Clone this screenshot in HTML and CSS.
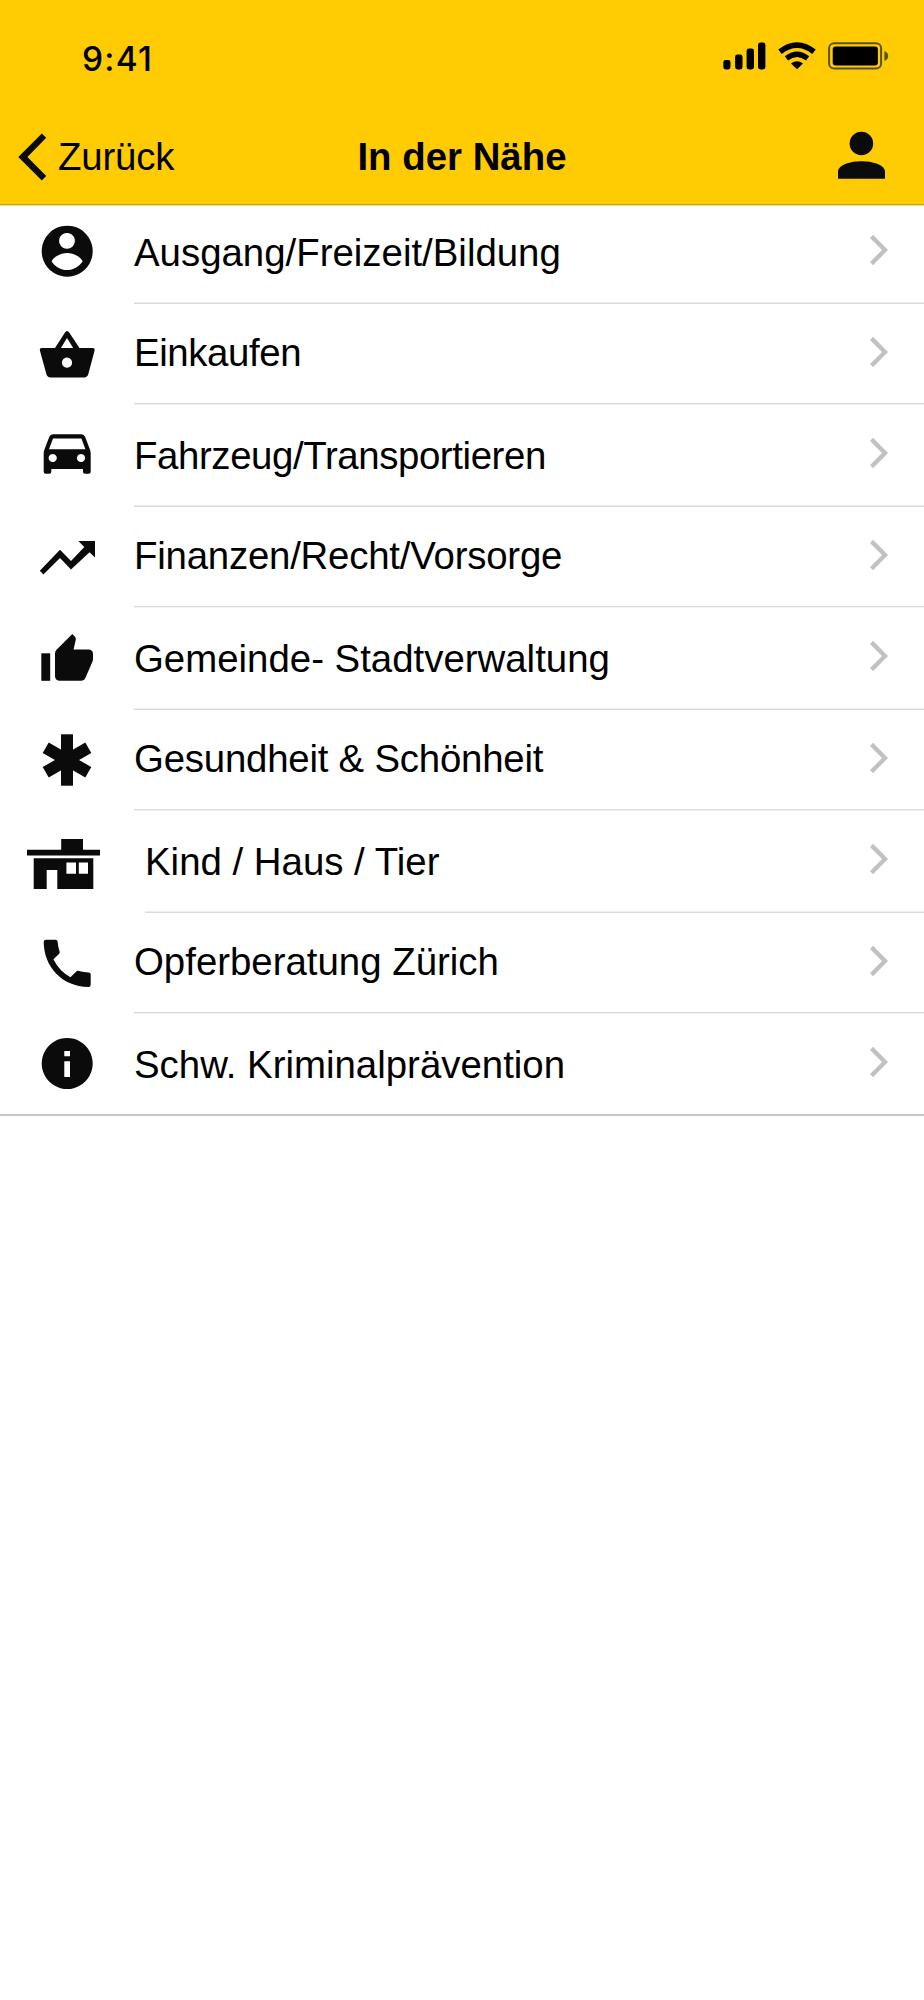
FILE: index.html
```html
<!DOCTYPE html>
<html lang="de">
<head>
    <meta charset="UTF-8">
    <meta name="viewport" content="width=device-width, initial-scale=1.0">
    <title>In der Nähe</title>
    <link rel="stylesheet" href="styles.css">
</head>
<body>
    <header class="header">
        <div class="status-bar">
            <span class="time">9:41</span>
            <div class="status-icons">
                <svg class="signal" width="43" height="28" viewBox="0 0 43 28">
                    <rect x="0.3" y="18" width="7.2" height="9.4" rx="2.4"/>
                    <rect x="12.1" y="12.6" width="7.4" height="14.8" rx="2.4"/>
                    <rect x="23.6" y="6.6" width="7.4" height="20.8" rx="2.4"/>
                    <rect x="35" y="0.6" width="7.4" height="26.8" rx="2.4"/>
                </svg>
                <svg class="wifi" width="38" height="28" viewBox="0 0 38 28">
                    <path d="M2 9.8Q19 -3.4 36 9.8" fill="none" stroke="#000" stroke-width="5.6"/>
                    <path d="M8.4 16.4Q19 8 29.6 16.4" fill="none" stroke="#000" stroke-width="5.2"/>
                    <path d="M13 21.6Q19 16.8 25 21.6L19 27.2Z"/>
                </svg>
                <svg class="battery" width="61" height="28" viewBox="0 0 61 28">
                    <rect x="1.1" y="1.2" width="52" height="25.4" rx="5" fill="none" stroke="#5a512a" stroke-width="2"/>
                    <rect x="4.7" y="4.6" width="45.2" height="18.8" rx="3"/>
                    <path d="M56.4 9q3.8 1.6 3.8 5t-3.8 5z" fill="#5a512a"/>
                </svg>
            </div>
        </div>
        <nav class="nav-bar">
            <a class="back" href="#">
                <svg width="28" height="48" viewBox="0 0 28 48">
                    <path d="M0.3 24L23.8 0.4L28.2 4.8L9.4 24L28.2 43L23.8 47.4Z"/>
                </svg>
                <span>Zurück</span>
            </a>
            <h1 class="title">In der Nähe</h1>
            <a class="profile" href="#">
                <svg width="47" height="48" viewBox="0 0 47 48">
                    <circle cx="23.4" cy="12.5" r="11.8"/>
                    <path d="M0 47.7V41C0 33.5 13 30.3 23.5 30.3S47 33.5 47 41V47.7Z"/>
                </svg>
            </a>
        </nav>
    </header>

    <ul class="list">
        <li class="item">
            <svg class="icon" viewBox="0 0 62 62">
                <path fill-rule="evenodd" d="M31.2 5.7a25.5 25.5 0 1 0 0.01 0ZM31 12.9a7.9 7.9 0 1 1 -0.01 0ZM15.5 41.2C18.5 36 25.5 33 31.2 33S43.8 36 46.7 41.2C43 47 37 50 31 50S19 47 15.5 41.2Z"/>
            </svg>
            <div class="content">
                <span class="label">Ausgang/Freizeit/Bildung</span>
                <svg class="chevron" viewBox="0 0 18 32"><path d="M0 3.9L3 0.8L18 16L3 31.2L0 28.1L12 16Z"/></svg>
            </div>
        </li>
        <li class="item">
            <svg class="icon" viewBox="0 0 62 62">
                <path d="M18.5 25.8L29 9.6Q31 6.6 33.2 9.6L44 25.8H37.6L31 15L24.5 25.8Z"/>
                <path fill-rule="evenodd" d="M5.8 25H56.4Q59 25 58.6 27.4L52.4 50.8Q51.4 54.6 48 54.6H14.5Q11.3 54.6 10.3 50.8L3.9 27.4Q3.5 25 5.8 25ZM31 34.6a5.1 5.1 0 1 0 0.01 0Z"/>
            </svg>
            <div class="content">
                <span class="label tighter">Einkaufen</span>
                <svg class="chevron" viewBox="0 0 18 32"><path d="M0 3.9L3 0.8L18 16L3 31.2L0 28.1L12 16Z"/></svg>
            </div>
        </li>
        <li class="item">
            <svg class="icon" viewBox="0 0 62 62">
                <path fill-rule="evenodd" d="M13.2 14Q14.2 11.3 17 11.3H45.4Q48.2 11.3 49.2 14L54.1 27Q54.7 28.4 54.7 30V48.7q0 2-2 2H49q-2 0-2-2V46H15.3V48.7q0 2-2 2H9.7q-2 0-2-2V30Q7.7 28.4 8.3 27ZM17 15.4L13 26.2H49.4L45.4 15.4ZM16.7 30.9a4.1 4.1 0 1 0 0.01 0ZM45 30.9a4.1 4.1 0 1 0 0.01 0Z"/>
            </svg>
            <div class="content">
                <span class="label tighter">Fahrzeug/Transportieren</span>
                <svg class="chevron" viewBox="0 0 18 32"><path d="M0 3.9L3 0.8L18 16L3 31.2L0 28.1L12 16Z"/></svg>
            </div>
        </li>
        <li class="item">
            <svg class="icon" viewBox="0 0 62 62">
                <path d="M3.8 44.8L24 23.8L35 35L48.3 21L42.3 15H59V31.6L53.5 26.2L35 43.4L24 32L7.4 48.4Z"/>
            </svg>
            <div class="content">
                <span class="label tight">Finanzen/Recht/Vorsorge</span>
                <svg class="chevron" viewBox="0 0 18 32"><path d="M0 3.9L3 0.8L18 16L3 31.2L0 28.1L12 16Z"/></svg>
            </div>
        </li>
        <li class="item">
            <svg class="icon" viewBox="0 0 62 62">
                <rect x="5.3" y="27.3" width="8.9" height="27.5"/>
                <path d="M36.3 8L39 10.7Q40.1 12 39.8 13.6L37.6 23.4H52.3Q57 23.4 57 28V33Q57 34.5 56.3 36L49.6 51.5Q48.2 54.7 45 54.7H24Q19 54.7 19 50V27.5Q19 25.3 20.5 23.8Z"/>
            </svg>
            <div class="content">
                <span class="label">Gemeinde- Stadtverwaltung</span>
                <svg class="chevron" viewBox="0 0 18 32"><path d="M0 3.9L3 0.8L18 16L3 31.2L0 28.1L12 16Z"/></svg>
            </div>
        </li>
        <li class="item">
            <svg class="icon" viewBox="0 0 62 62">
                <rect x="25" y="5.3" width="12" height="51.4"/>
                <rect x="25" y="6.4" width="12" height="49.2" transform="rotate(60 31 31)"/>
                <rect x="25" y="6.4" width="12" height="49.2" transform="rotate(-60 31 31)"/>
            </svg>
            <div class="content">
                <span class="label tight">Gesundheit &amp; Schönheit</span>
                <svg class="chevron" viewBox="0 0 18 32"><path d="M0 3.9L3 0.8L18 16L3 31.2L0 28.1L12 16Z"/></svg>
            </div>
        </li>
        <li class="item">
            <svg class="icon icon-wide" viewBox="0 0 73 62">
                <path d="M34.2 10H56V20.8H73V26.6H0V20.8H34.2Z"/>
                <path fill-rule="evenodd" d="M6.7 29.3H66.3V60H30.3V41H19.7V60H6.7ZM39.4 33.4V44.7H49V33.4ZM51.8 33.4V44.7H61V33.4Z"/>
            </svg>
            <div class="content">
                <span class="label">Kind / Haus / Tier</span>
                <svg class="chevron" viewBox="0 0 18 32"><path d="M0 3.9L3 0.8L18 16L3 31.2L0 28.1L12 16Z"/></svg>
            </div>
        </li>
        <li class="item">
            <svg class="icon" viewBox="0 0 62 62">
                <path d="M10 7.7H19.5Q21.3 7.7 21.6 9.6Q22 15 23.6 19.5Q24 21 23 22L17.4 27.3Q23.5 39.5 34.4 45.2L40.3 39.4Q41.3 38.5 42.8 38.9Q47.5 40.3 52.7 40.4Q54.7 40.6 54.7 42.4V52.8Q54.7 55 52.5 55C26 54.5 8 35 7.7 10Q7.7 7.7 10 7.7Z"/>
            </svg>
            <div class="content">
                <span class="label">Opferberatung Zürich</span>
                <svg class="chevron" viewBox="0 0 18 32"><path d="M0 3.9L3 0.8L18 16L3 31.2L0 28.1L12 16Z"/></svg>
            </div>
        </li>
        <li class="item">
            <svg class="icon" viewBox="0 0 62 62">
                <path fill-rule="evenodd" d="M31.2 6a25.5 25.5 0 1 0 0.01 0ZM28.3 19H34V24.2H28.3ZM28.3 29.2H34V45H28.3Z"/>
            </svg>
            <div class="content">
                <span class="label">Schw. Kriminalprävention</span>
                <svg class="chevron" viewBox="0 0 18 32"><path d="M0 3.9L3 0.8L18 16L3 31.2L0 28.1L12 16Z"/></svg>
            </div>
        </li>
    </ul>
</body>
</html>
```
FILE: styles.css
```css
* {
    box-sizing: border-box;
}

body {
    margin: 0;
    min-height: 100vh;
    background-color: #fff;
    color: #000;
    font-family: "Liberation Sans", Arial, sans-serif;
    font-size: 38.4px;
    line-height: 44px;
}

svg {
    display: block;
    flex-shrink: 0;
}

.header {
    height: 205px;
    background-color: #ffcc03;
    border-bottom: 1px solid #c9a20a;
    box-shadow: 0 1px 0 #e9dcae;
}

.status-bar {
    display: flex;
    justify-content: space-between;
    height: 109px;
    padding: 37px 35px 0 82px;
}

.time {
    font-family: Inter, sans-serif;
    font-size: 33.5px;
    font-weight: 500;
    letter-spacing: 1.2px;
}

.status-icons {
    display: flex;
    padding-top: 5px;
}

.wifi {
    margin-left: 12px;
}

.battery {
    margin-left: 12px;
}

.nav-bar {
    display: grid;
    grid-template-columns: 1fr auto 1fr;
    align-items: center;
    height: 95px;
    padding: 0 18px;
}

.back {
    display: flex;
    align-items: center;
    gap: 12px;
    color: #000;
    text-decoration: none;
    letter-spacing: -0.2px;
}

.back svg,
.profile svg,
.icon {
    fill: #0b0b0b;
}

.title {
    margin: 0;
    font-size: inherit;
    font-weight: bold;
}

.profile {
    justify-self: end;
    margin: 0 21px 3px 0;
}

.list {
    margin: 0;
    padding: 0;
    list-style: none;
}

.item {
    display: flex;
    align-items: flex-end;
    height: 103px;
}

.item:nth-child(even) {
    height: 100px;
}

.item:first-child {
    height: 99px;
}

.icon {
    width: 62px;
    height: 62px;
    margin: 0 36px 22px;
}

.item:nth-child(even) .icon {
    margin-bottom: 19px;
}

.icon-wide {
    width: 73px;
    margin: 0 45px 22px 27px;
}

.content {
    display: flex;
    flex: 1;
    align-items: flex-end;
    justify-content: space-between;
    height: 100%;
    padding-right: 36px;
    border-bottom: 1px solid #dadada;
    box-shadow: inset 0 -1px 0 #ededed;
}

.item:nth-child(even) .content {
    box-shadow: 0 1px 0 #f1f1f1;
}

.label {
    padding-bottom: 28px;
}

.tight {
    letter-spacing: -0.22px;
}

.tighter {
    letter-spacing: -0.4px;
}

.chevron {
    width: 18px;
    height: 32px;
    margin-bottom: 37.5px;
    fill: #c1c1c1;
}

.item:nth-child(even) .chevron {
    margin-bottom: 35px;
}

.item:last-child {
    border-bottom: 2px solid #c8c7cc;
}

.item:last-child .icon {
    margin-bottom: 20px;
}

.item:last-child .content {
    border-bottom: none;
    box-shadow: none;
}

.item:last-child .label {
    padding-bottom: 27px;
}

.item:last-child .chevron {
    margin-bottom: 36.5px;
}
```
